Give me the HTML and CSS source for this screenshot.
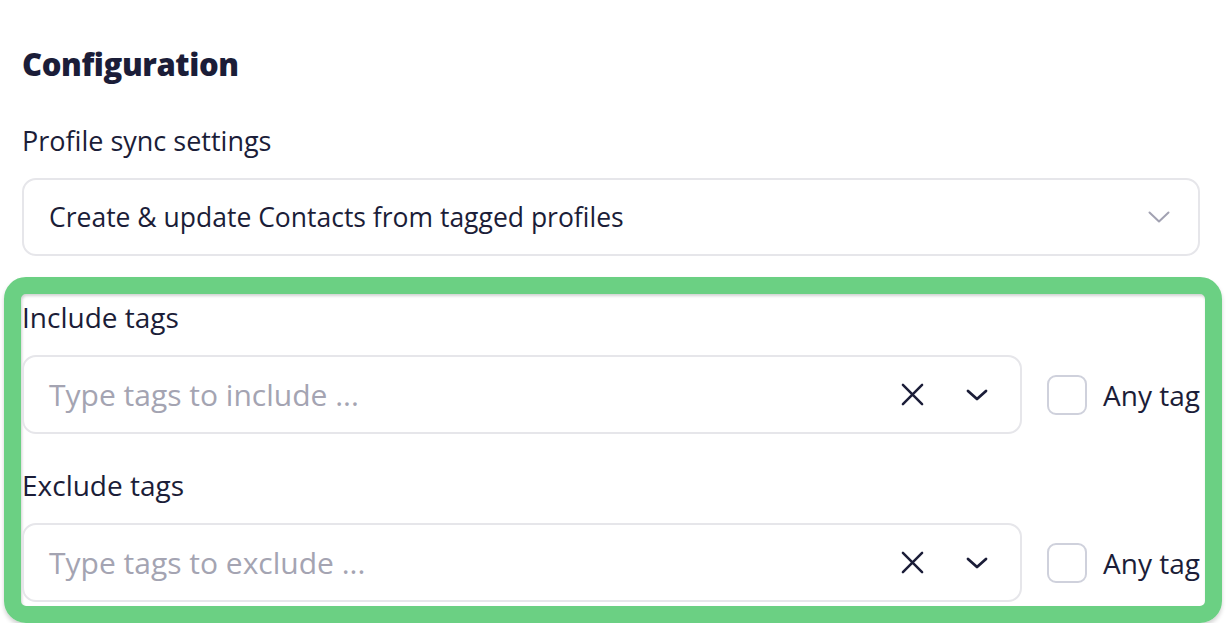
FILE: index.html
```html
<!DOCTYPE html>
<html lang="en">
<head>
  <meta charset="UTF-8" />
  <title>Configuration</title>
  <link rel="stylesheet" href="styles.css">
</head>
<body>
  <div class="page">
    <h1>Configuration</h1>

    <div class="field">
      <label class="field-label">Profile sync settings</label>
      <div class="select">
        <span>Create &amp; update Contacts from tagged profiles</span>
        <svg class="select-arrow" width="22" height="12" viewBox="0 0 22 12">
          <path d="M1.5 1.5 L11 10.5 L20.5 1.5" fill="none" stroke="#a2a2b2" stroke-width="2" stroke-linecap="round" stroke-linejoin="round"/>
        </svg>
      </div>
    </div>

    <div class="highlight">
      <div class="highlight-inner">
        <div class="field">
          <label class="field-label tag-label">Include tags</label>
          <div class="tag-row">
            <div class="tag-input">
              <span class="placeholder">Type tags to include ...</span>
              <svg class="icon-clear" width="24" height="24" viewBox="0 0 24 24">
                <path d="M2 2 L22 22 M22 2 L2 22" fill="none" stroke="#1b1d38" stroke-width="2.6" stroke-linecap="round"/>
              </svg>
              <svg class="icon-open" width="22" height="12" viewBox="0 0 22 12">
                <path d="M2 2 L11 10 L20 2" fill="none" stroke="#1b1d38" stroke-width="2.8" stroke-linecap="round" stroke-linejoin="round"/>
              </svg>
            </div>
            <label class="check"><span class="box"></span>Any tag</label>
          </div>
        </div>

        <div class="field">
          <label class="field-label tag-label">Exclude tags</label>
          <div class="tag-row">
            <div class="tag-input">
              <span class="placeholder">Type tags to exclude ...</span>
              <svg class="icon-clear" width="24" height="24" viewBox="0 0 24 24">
                <path d="M2 2 L22 22 M22 2 L2 22" fill="none" stroke="#1b1d38" stroke-width="2.6" stroke-linecap="round"/>
              </svg>
              <svg class="icon-open" width="22" height="12" viewBox="0 0 22 12">
                <path d="M2 2 L11 10 L20 2" fill="none" stroke="#1b1d38" stroke-width="2.8" stroke-linecap="round" stroke-linejoin="round"/>
              </svg>
            </div>
            <label class="check"><span class="box"></span>Any tag</label>
          </div>
        </div>
      </div>
    </div>
  </div>
</body>
</html>
```

FILE: styles.css
```css
body {
  margin: 0;
  background: #fff;
  font-family: 'Open Sans', 'Noto Sans', sans-serif;
  color: #1b1d38;
}
.page {
  padding: 44px 30px 0 22px;
}
h1 {
  margin: 0 0 42px;
  font-size: 31px;
  font-weight: 800;
  line-height: 40px;
  letter-spacing: -0.4px;
}
.field-label {
  display: block;
  font-size: 27px;
  line-height: 30px;
  margin-bottom: 22px;
}
.tag-label {
  font-size: 28px;
  margin-bottom: 23px;
}
.select {
  display: flex;
  align-items: center;
  justify-content: space-between;
  height: 78px;
  box-sizing: border-box;
  padding: 0 28px 0 25px;
  border: 2px solid #e6e6ea;
  border-radius: 14px;
  font-size: 26.5px;
}
.highlight {
  margin: 21px -22px 0 -18px;
  border: 17px solid #6bd083;
  border-radius: 22px;
  box-shadow: 0 3px 4px rgba(0, 0, 0, 0.18);
}
.highlight-inner {
  padding: 8px 5px 4px 1px;
  box-shadow: inset 1px 2px 3px rgba(0, 0, 0, 0.18);
  border-radius: 5px;
}
.highlight-inner .field + .field {
  margin-top: 36px;
}
.tag-row {
  display: flex;
  align-items: center;
}
.tag-input {
  display: flex;
  align-items: center;
  width: 1000px;
  height: 79px;
  box-sizing: border-box;
  padding: 0 32px 0 25px;
  border: 2px solid #e6e6ea;
  border-radius: 14px;
}
.placeholder {
  flex: 1;
  font-size: 30px;
  color: #a4a4b2;
}
.icon-clear {
  width: 23px;
  height: 23px;
}
.icon-open {
  margin-left: 42px;
}
.check {
  display: flex;
  align-items: center;
  margin-left: 25px;
  font-size: 28px;
}
.box {
  width: 40px;
  height: 40px;
  box-sizing: border-box;
  border: 2.5px solid #cfd1dc;
  border-radius: 9px;
  margin-right: 16px;
}
```
